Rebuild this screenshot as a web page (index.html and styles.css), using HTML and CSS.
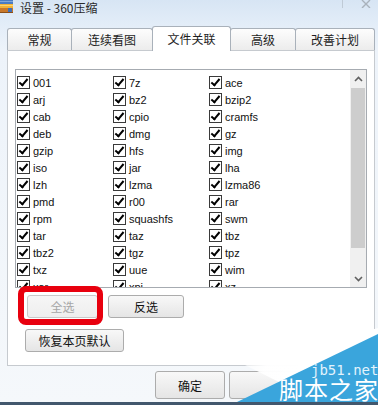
FILE: index.html
```html
<!DOCTYPE html>
<html lang="zh-CN">
<head>
<meta charset="utf-8">
<title>设置 - 360压缩</title>
<link rel="stylesheet" href="styles.css">
</head>
<body>
<div class="window">
  <div class="titlebar">
    <svg class="app-icon" width="14" height="14" viewBox="0 0 14 14">
      <rect x="0" y="0" width="13" height="4" fill="#4a7cc4"/>
      <rect x="0" y="1" width="13" height="1" fill="#7fa6dc"/>
      <rect x="0" y="4" width="13" height="4" fill="#f2b23a"/>
      <rect x="0" y="5" width="13" height="1" fill="#ffd56a"/>
      <rect x="0" y="8" width="13" height="5" fill="#c8782a"/>
      <rect x="8" y="8" width="4" height="5" fill="#3f6fb8"/>
      <rect x="0" y="12" width="13" height="1" fill="#8a4f18"/>
    </svg>
    <span class="title">设置 - 360压缩</span>
    <span class="sep"></span>
    <svg class="close" width="10" height="8" viewBox="0 0 10 8">
      <path d="M1 0 L9 8 M9 0 L1 8" stroke="#a9b2bc" stroke-width="1.4" fill="none"/>
    </svg>
  </div>

  <div class="tabs">
    <div class="tab w1">常规</div>
    <div class="tab w2">连续看图</div>
    <div class="tab w3 active">文件关联</div>
    <div class="tab w4">高级</div>
    <div class="tab w5">改善计划</div>
  </div>

  <div class="panel">
    <div class="list">
      <div class="items">
        <label class="item"><span class="cb"></span>001</label>
        <label class="item"><span class="cb"></span>7z</label>
        <label class="item"><span class="cb"></span>ace</label>
        <label class="item"><span class="cb"></span>arj</label>
        <label class="item"><span class="cb"></span>bz2</label>
        <label class="item"><span class="cb"></span>bzip2</label>
        <label class="item"><span class="cb"></span>cab</label>
        <label class="item"><span class="cb"></span>cpio</label>
        <label class="item"><span class="cb"></span>cramfs</label>
        <label class="item"><span class="cb"></span>deb</label>
        <label class="item"><span class="cb"></span>dmg</label>
        <label class="item"><span class="cb"></span>gz</label>
        <label class="item"><span class="cb"></span>gzip</label>
        <label class="item"><span class="cb"></span>hfs</label>
        <label class="item"><span class="cb"></span>img</label>
        <label class="item"><span class="cb"></span>iso</label>
        <label class="item"><span class="cb"></span>jar</label>
        <label class="item"><span class="cb"></span>lha</label>
        <label class="item"><span class="cb"></span>lzh</label>
        <label class="item"><span class="cb"></span>lzma</label>
        <label class="item"><span class="cb"></span>lzma86</label>
        <label class="item"><span class="cb"></span>pmd</label>
        <label class="item"><span class="cb"></span>r00</label>
        <label class="item"><span class="cb"></span>rar</label>
        <label class="item"><span class="cb"></span>rpm</label>
        <label class="item"><span class="cb"></span>squashfs</label>
        <label class="item"><span class="cb"></span>swm</label>
        <label class="item"><span class="cb"></span>tar</label>
        <label class="item"><span class="cb"></span>taz</label>
        <label class="item"><span class="cb"></span>tbz</label>
        <label class="item"><span class="cb"></span>tbz2</label>
        <label class="item"><span class="cb"></span>tgz</label>
        <label class="item"><span class="cb"></span>tpz</label>
        <label class="item"><span class="cb"></span>txz</label>
        <label class="item"><span class="cb"></span>uue</label>
        <label class="item"><span class="cb"></span>wim</label>
        <label class="item"><span class="cb"></span>xar</label>
        <label class="item"><span class="cb"></span>xpi</label>
        <label class="item"><span class="cb"></span>xz</label>
      </div>
      <div class="scroll">
        <div class="sb-btn">
          <svg width="9" height="6" viewBox="0 0 9 6"><path d="M1 5 L4.5 1.5 L8 5" stroke="#606060" stroke-width="1.6" fill="none"/></svg>
        </div>
        <div class="thumb"></div>
        <div class="track-rest"></div>
        <div class="sb-btn">
          <svg width="9" height="6" viewBox="0 0 9 6"><path d="M1 1 L4.5 4.5 L8 1" stroke="#606060" stroke-width="1.6" fill="none"/></svg>
        </div>
      </div>
    </div>

    <div class="btnrow">
      <div class="btn-wrap">
        <div class="btn disabled w-all">全选</div>
        <div class="highlight"></div>
      </div>
      <div class="btn w-inv">反选</div>
    </div>
    <div class="btnrow2">
      <div class="btn w-reset">恢复本页默认</div>
    </div>
  </div>

  <div class="footer">
    <div class="btn big">确定</div>
    <div class="btn big" aria-label="取消"></div>
    <div class="btn big" aria-label="应用"></div>
  </div>
  <div class="spacer"></div>
  <div class="bottom-edge"></div>

  <svg class="watermark" width="378" height="405" viewBox="0 0 378 405">
    <defs>
      <linearGradient id="wfade" x1="245" y1="345" x2="300" y2="380" gradientUnits="userSpaceOnUse">
        <stop offset="0" stop-color="#ffffff" stop-opacity="0.3"/>
        <stop offset="0.45" stop-color="#ffffff" stop-opacity="0.97"/>
        <stop offset="1" stop-color="#ffffff" stop-opacity="1"/>
      </linearGradient>
    </defs>
    <polygon points="245,365 378,328 378,335 279,382" fill="url(#wfade)"/>
    <polygon points="378,334 378,402 237,402" fill="#3aa5dc"/>
    <text x="311" y="375" class="wm-url">jb51.net</text>
    <text x="279" y="399" class="wm-name">脚本之家</text>
  </svg>
</div>
</body>
</html>
```

FILE: styles.css
```css
html, body {
  margin: 0;
  padding: 0;
}

body {
  width: 378px;
  height: 405px;
  overflow: hidden;
  font-family: "Noto Sans CJK SC", "Noto Sans", sans-serif;
  color: #1e1e1e;
}

.window {
  position: relative;
  width: 378px;
  height: 405px;
  display: flex;
  flex-direction: column;
  overflow: hidden;
  background: linear-gradient(#d7e5f4 0, #e3edf8 25px, #edf3fa 50px, #f5f8fb 100%);
}

/* title bar */
.titlebar {
  height: 25px;
  display: flex;
  align-items: flex-start;
  flex-shrink: 0;
}

.app-icon {
  flex-shrink: 0;
}

.title {
  margin-left: 6px;
  font-size: 12px;
  line-height: 16px;
  color: #2a2a2a;
}

.sep {
  margin-left: auto;
  width: 1px;
  height: 8px;
  background: #bfcad6;
}

.close {
  margin: 0 7px 0 18px;
}

/* tabs */
.tabs {
  height: 25px;
  display: flex;
  align-items: flex-end;
  padding-left: 7px;
  position: relative;
  z-index: 2;
  flex-shrink: 0;
}

.tab {
  height: 22px;
  box-sizing: border-box;
  border: 1px solid #a9b1ba;
  border-bottom: none;
  border-radius: 3px 3px 0 0;
  background: linear-gradient(#fdfdfd, #ececec);
  font-size: 12px;
  display: flex;
  align-items: center;
  justify-content: center;
  margin-right: -1px;
  color: #1e1e1e;
}

.tab.active {
  height: 25px;
  margin-bottom: -1px;
  background: #ffffff;
  position: relative;
  z-index: 3;
  padding-bottom: 2px;
}

.w1 { width: 65px; }
.w2 { width: 82px; }
.w3 { width: 79px; }
.w4 { width: 66px; }
.w5 { width: 80px; }

/* panel */
.panel {
  margin-left: 7px;
  width: 368px;
  height: 316px;
  box-sizing: border-box;
  border: 1px solid #c6cacf;
  background: #ffffff;
  padding: 18px 0 0 7px;
  position: relative;
  z-index: 1;
  flex-shrink: 0;
}

.list {
  width: 352px;
  height: 219px;
  box-sizing: border-box;
  border: 1px solid #a6abb1;
  display: flex;
  overflow: hidden;
  background: #ffffff;
}

.items {
  flex: 1;
  display: grid;
  grid-template-columns: 96px 96px 96px;
  grid-auto-rows: 17px;
  align-content: start;
  padding: 4px 0 0 1px;
  overflow: hidden;
}

.item {
  display: flex;
  align-items: center;
  gap: 3px;
  font-family: "Liberation Sans", Arial, sans-serif;
  font-size: 11px;
  color: #111;
  white-space: nowrap;
}

.cb {
  width: 13px;
  height: 13px;
  box-sizing: border-box;
  border: 1px solid #3a3a3a;
  background: #fff;
  position: relative;
  flex-shrink: 0;
}

.cb::after {
  content: "";
  position: absolute;
  left: 3px;
  top: 0px;
  width: 3px;
  height: 7px;
  border-right: 2px solid #000;
  border-bottom: 2px solid #000;
  transform: rotate(40deg);
}

.scroll {
  width: 16px;
  background: #f0f0f0;
  display: flex;
  flex-direction: column;
  flex-shrink: 0;
}

.sb-btn {
  height: 17px;
  display: flex;
  align-items: center;
  justify-content: center;
  flex-shrink: 0;
}

.thumb {
  height: 160px;
  margin: 1px 1px 0 1px;
  background: #cdcdcd;
  flex-shrink: 0;
}

.track-rest {
  flex: 1;
}

/* buttons */
.btn {
  height: 23px;
  box-sizing: border-box;
  border: 1px solid #acacac;
  border-radius: 3px;
  background: linear-gradient(#f8f8f8, #e5e5e5);
  font-size: 12px;
  display: flex;
  align-items: center;
  justify-content: center;
  color: #111;
}

.btn.disabled {
  color: #a6a6a6;
  border-color: #c9c9c9;
  background: linear-gradient(#f6f6f6, #eeeeee);
}

.btnrow {
  display: flex;
  gap: 10px;
  margin: 7px 0 0 12px;
}

.btn-wrap {
  position: relative;
}

.w-all { width: 71px; }
.w-inv { width: 76px; }
.w-reset { width: 99px; }

.highlight {
  position: absolute;
  left: -9px;
  top: -9px;
  width: 85px;
  height: 39px;
  box-sizing: border-box;
  border: 6px solid #e8000e;
  border-radius: 8px;
}

.btnrow2 {
  display: flex;
  margin: 11px 0 0 10px;
}

.footer {
  display: flex;
  gap: 4px;
  margin: 5px 0 0 155px;
  flex-shrink: 0;
}

.btn.big {
  width: 70px;
  height: 28px;
}

.spacer {
  flex: 1;
}

.bottom-edge {
  height: 3px;
  background: #42576d;
  flex-shrink: 0;
}

/* watermark overlay */
.watermark {
  position: absolute;
  left: 0;
  top: 0;
  z-index: 5;
  pointer-events: none;
}

.wm-url {
  font-family: "DejaVu Sans Mono", monospace;
  font-size: 14px;
  fill: #e3f3fc;
}

.wm-name {
  font-family: "Noto Sans CJK SC", sans-serif;
  font-size: 24px;
  fill: #ffffff;
  letter-spacing: 1px;
}
```
